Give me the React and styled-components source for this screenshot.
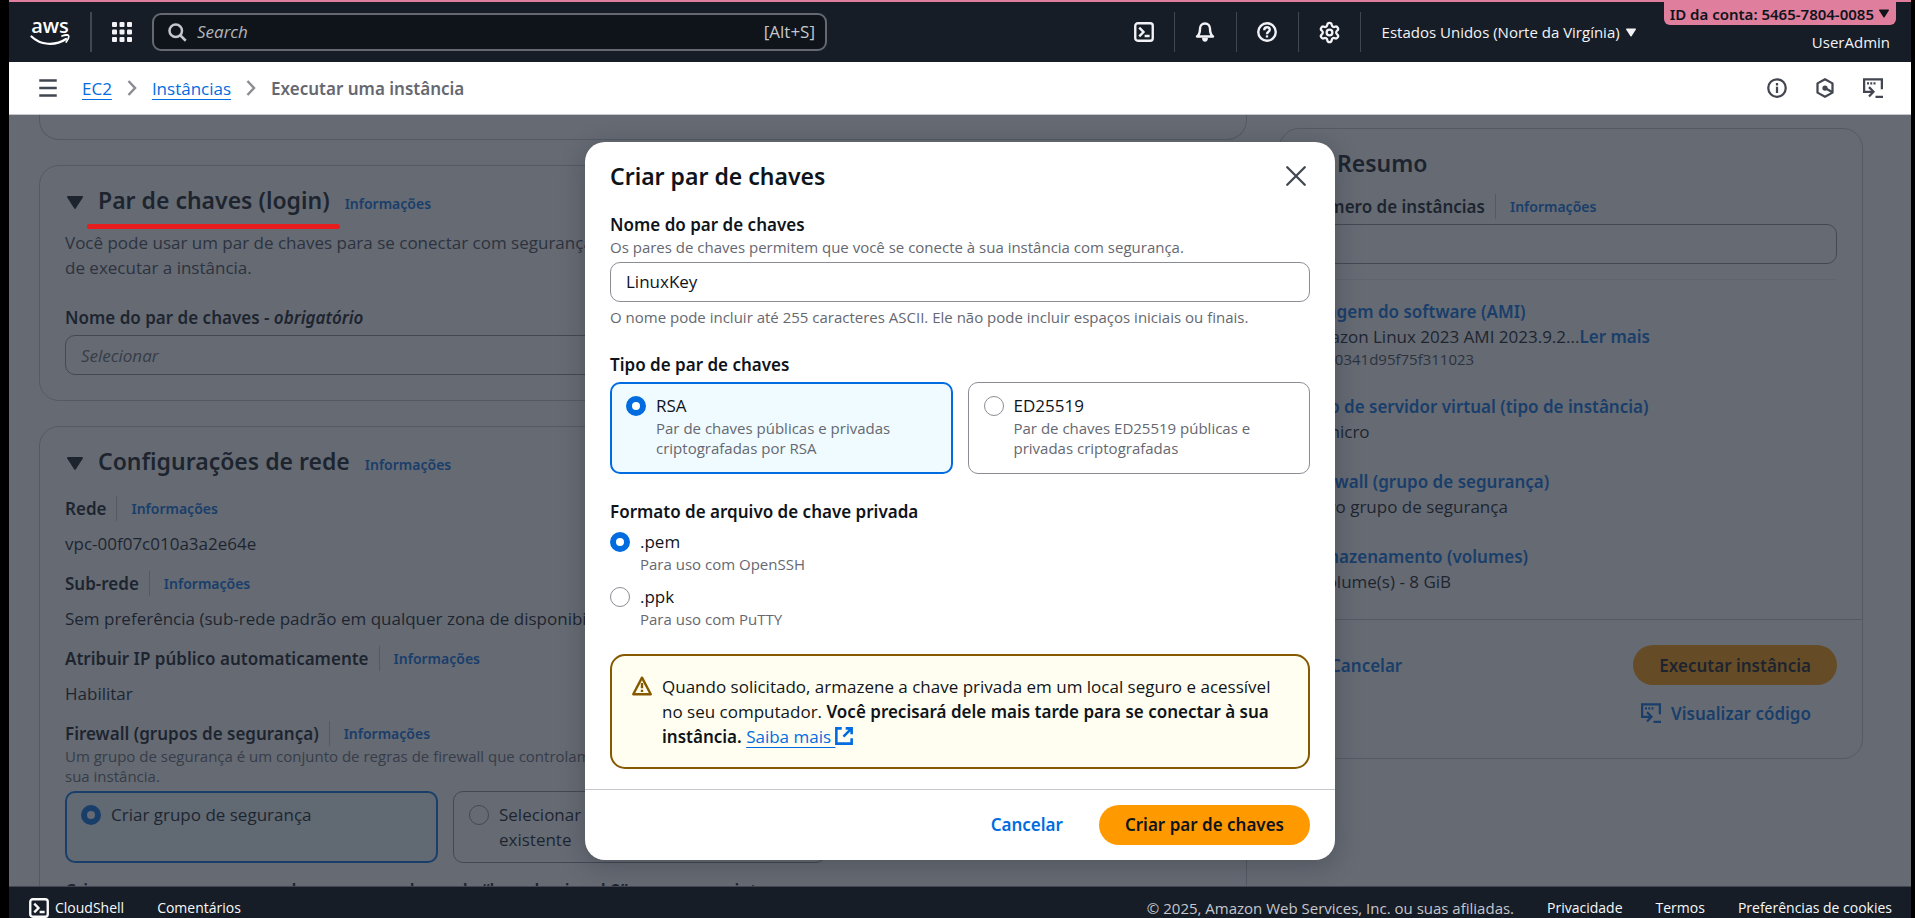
import React from 'react';
import styled, { createGlobalStyle, css } from 'styled-components';
import { Settings } from 'lucide-react';

const bodyFont = '"Open Sans", "Noto Sans", sans-serif';
const boldFont = '"Noto Sans", "Open Sans", sans-serif';

const c = {
  nav: '#161d26',
  text: '#0f141a',
  muted: '#656871',
  icon: '#424650',
  border: '#8c8c94',
  divider: '#c6c6cd',
  link: '#006ce0',
  primary: '#ff9900',
  pink: '#e07f9d',
  warn: '#855900',
};

const bold = css`
  font-family: ${boldFont};
  font-weight: 600;
`;

const GlobalStyle = createGlobalStyle`
  * { box-sizing: border-box; }
  body {
    margin: 0;
    background: #000;
    color: ${c.text};
    font: 400 17px/25px ${bodyFont};
  }
  button, input, select { font: inherit; color: inherit; }
  h1, h2, h3, p, fieldset, legend { margin: 0; padding: 0; border: 0; min-width: 0; }
`;

const Page = styled.div`
  display: flex;
  flex-direction: column;
  height: 100vh;
  margin: 0 4px 0 9px;
  overflow: hidden;
`;

/* ---------- top navigation ---------- */

const TopNav = styled.header`
  display: flex;
  align-items: center;
  flex: none;
  height: 62px;
  padding: 0 15px 0 21px;
  border-top: 2px solid ${c.pink};
  background: ${c.nav};
  color: #f3f3f7;
  font-size: 15px;
  line-height: 20px;
`;

const Logo = styled.a`
  display: flex;
  flex-direction: column;
  align-items: center;
  width: 40px;
  margin-right: 20px;
  color: #fff;
  font-weight: 600;
  font-size: 20px;
  line-height: 18px;
  text-decoration: none;
  svg { display: block; margin-top: -1px; }
`;

const NavRule = styled.span`
  width: ${p => p.$wide || 1}px;
  height: 40px;
  background: #424650;
`;

const IconButton = styled.button`
  display: flex;
  align-items: center;
  justify-content: center;
  width: ${p => p.$width || 20}px;
  height: 40px;
  padding: 0;
  border: 0;
  background: none;
  color: ${p => p.$color || 'inherit'};
`;

const Services = styled(IconButton)`
  width: 60px;
`;

const SearchBox = styled.label`
  display: flex;
  align-items: center;
  gap: 10px;
  flex: 0 1 675px;
  height: 38px;
  padding: 0 10px 0 13px;
  border: 2px solid #656871;
  border-radius: 9px;
  background: #0f141a;
  color: #c6c6cd;
  font-size: 17px;
`;

const SearchInput = styled.input`
  flex: 1;
  min-width: 0;
  padding: 0;
  border: 0;
  outline: 0;
  background: none;
  &::placeholder { color: #b4b4bb; font-style: italic; opacity: 1; }
`;

const NavTools = styled.div`
  display: flex;
  align-items: center;
  margin-left: auto;
`;

const Region = styled.button`
  display: flex;
  align-items: center;
  gap: 6px;
  padding: 0;
  margin: 0 28px 0 21px;
  border: 0;
  background: none;
  white-space: nowrap;
`;

const Account = styled.div`
  display: flex;
  flex-direction: column;
  align-items: flex-end;
  align-self: stretch;
  gap: 7px;
`;

const AccountBadge = styled.button`
  ${bold}
  display: flex;
  align-items: center;
  gap: 5px;
  height: 23px;
  padding: 0 7px 0 6px;
  border: 0;
  border-radius: 0 0 6px 6px;
  background: ${c.pink};
  color: ${c.text};
  font-size: 15px;
  white-space: nowrap;
`;

const UserName = styled.span`
  padding-right: 6px;
`;

/* ---------- breadcrumb bar ---------- */

const CrumbBar = styled.div`
  display: flex;
  align-items: center;
  flex: none;
  height: 53px;
  padding: 0 28px 0 29px;
  border-bottom: 1px solid ${c.divider};
  background: #fff;
`;

const Crumbs = styled.nav`
  display: flex;
  align-items: center;
  gap: 15px;
  margin-left: 24px;
`;

const Link = styled.a`
  color: ${c.link};
  text-decoration: underline;
  text-decoration-thickness: 1px;
  text-underline-offset: 4px;
`;

const CurrentCrumb = styled.span`
  ${bold}
  color: ${c.muted};
`;

const CrumbTools = styled.div`
  display: flex;
  gap: 28px;
  margin-left: auto;
  color: ${c.icon};
`;

/* ---------- main content ---------- */

const Main = styled.main`
  position: relative;
  flex: 1;
  min-height: 0;
  overflow: hidden;
  background: #fff;
`;

const Columns = styled.div`
  display: grid;
  grid-template-columns: minmax(0, 1fr) 584px;
  align-items: start;
  gap: 32px;
  padding: 0 48px 0 30px;
`;

const Stack = styled.div`
  display: flex;
  flex-direction: column;
  gap: ${p => p.$gap || 0}px;
`;

const Card = styled.section`
  border: 1px solid ${c.divider};
  border-radius: 20px;
  padding: 19px 25px 25px;
`;

const CardTail = styled.div`
  height: 25px;
  border: 1px solid ${c.divider};
  border-top: 0;
  border-radius: 0 0 20px 20px;
`;

const Aside = styled.aside`
  margin-top: 13px;
  border: 1px solid ${c.divider};
  border-radius: 20px;
`;

const AsideBody = styled.div`
  padding: 19px 25px 25px 24px;
`;

const CardHeader = styled.div`
  display: flex;
  align-items: baseline;
  gap: 15px;
  height: 30px;
  margin-bottom: ${p => p.$space}px;
  svg { margin-left: 2px; }
`;

const Title = styled.h2`
  ${bold}
  position: relative;
  font-size: 23px;
  line-height: 30px;
  white-space: nowrap;
`;

const Marker = styled.span`
  position: absolute;
  z-index: 3;
  left: -11px;
  right: -10px;
  bottom: -14px;
  height: 5px;
  border-radius: 3px;
  background: #e81c1c;
`;

const InfoLink = styled.a`
  ${bold}
  color: ${c.link};
  font-size: 14px;
  line-height: 20px;
  text-decoration: none;
`;

const LabelRow = styled.div`
  display: flex;
  align-items: center;
`;

const Label = styled.label`
  ${bold}
  display: block;
`;

const LabelRule = styled.span`
  width: 1px;
  height: 25px;
  margin: 0 14px 0 10px;
  background: ${c.divider};
`;

const Text = styled.p`
  color: ${p => (p.$muted ? c.icon : 'inherit')};
`;

const Hint = styled.p`
  color: ${c.muted};
  font-size: 15px;
  line-height: 20px;
`;

const field = css`
  display: block;
  width: 100%;
  height: 40px;
  padding: 0 15px;
  border: 1px solid ${c.border};
  border-radius: 10px;
  background: #fff;
`;

const TextInput = styled.input`${field}`;

const SelectInput = styled.select`
  ${field}
  appearance: none;
  color: ${c.muted};
  font-style: italic;
`;

const Field = styled.div`
  display: flex;
  flex-direction: column;
  margin-top: ${p => p.$top || 0}px;
  ${TextInput}, ${SelectInput} { margin-top: 5px; }
  ${TextInput} + ${Hint} { margin-top: 5px; }
`;

const Radio = styled.input`
  appearance: none;
  flex: none;
  width: 20px;
  height: 20px;
  margin: 3px 0 0;
  border: 1px solid ${c.border};
  border-radius: 50%;
  background: #fff;
  &:checked { border: 6px solid ${c.link}; }
`;

const Tiles = styled.div`
  display: grid;
  grid-template-columns: 1fr 1fr;
  gap: 15px;
  max-width: ${p => p.$max || 'none'};
  margin-top: 5px;
`;

const Tile = styled.label`
  display: flex;
  gap: 10px;
  padding: 10px 15px ${p => (p.$roomy ? 15 : 10)}px;
  border: 1px solid ${c.border};
  border-radius: 10px;
  &:has(:checked) {
    padding: 9px 14px ${p => (p.$roomy ? 14 : 9)}px;
    border: 2px solid ${c.link};
    background: #f0fbff;
  }
`;

const Option = styled.label`
  display: flex;
  gap: 10px;
`;

const OptionName = styled.span`
  display: block;
`;

const OptionHint = styled.span`
  display: block;
  color: ${c.muted};
  font-size: 15px;
  line-height: 20px;
`;

const NextLine = styled.p`
  ${bold}
  margin-top: 15px;
`;

const SummaryList = styled.div`
  display: flex;
  flex-direction: column;
  gap: 25px;
  margin-top: 15px;
  padding-top: 19px;
  border-top: 1px solid #ebebf0;
`;

const SummaryLink = styled.a`
  ${bold}
  color: ${c.link};
  text-decoration: none;
`;

const AmiId = styled.p`
  color: ${c.icon};
  font-size: 15px;
  line-height: 20px;
`;

const AsideFooter = styled.div`
  display: grid;
  grid-template-columns: auto auto;
  justify-content: space-between;
  justify-items: end;
  row-gap: 8px;
  padding: 25px 25px 25px 24px;
  border-top: 1px solid ${c.divider};
`;

const Button = styled.button`
  ${bold}
  display: inline-flex;
  align-items: center;
  justify-content: center;
  gap: 10px;
  height: 40px;
  padding: 0 26px;
  border: 0;
  border-radius: 20px;
  white-space: nowrap;
  background: ${p => (p.$primary ? c.primary : 'none')};
  color: ${p => (p.$primary ? c.text : c.link)};
`;

const CodeButton = styled(Button)`
  grid-column: 2;
`;

/* ---------- modal ---------- */

const Overlay = styled.div`
  position: absolute;
  inset: 0;
  z-index: 2;
  background: rgba(35, 43, 55, 0.7);
`;

const ModalLayer = styled.div`
  position: absolute;
  inset: 0;
  z-index: 4;
  display: flex;
  align-items: center;
  justify-content: center;
`;

const Dialog = styled.div`
  width: 750px;
  border-radius: 20px;
  background: #fff;
  box-shadow: 0 5px 25px rgba(15, 20, 26, 0.25);
`;

const DialogHeader = styled.div`
  display: flex;
  align-items: center;
  justify-content: space-between;
  height: 70px;
  padding: 0 27px 2px 25px;
`;

const DialogBody = styled.div`
  display: flex;
  flex-direction: column;
  gap: 25px;
  padding: 0 25px 20px;
`;

const Options = styled.div`
  display: flex;
  flex-direction: column;
  gap: 10px;
  margin-top: 5px;
`;

const Alert = styled.div`
  display: flex;
  gap: 10px;
  padding: 18px 20px;
  border: 2px solid ${c.warn};
  border-radius: 15px;
  background: #fffef0;
  svg { flex: none; margin-top: 2px; color: ${c.warn}; }
  ${Link} svg { color: inherit; vertical-align: -2px; }
`;

const Strong = styled.strong`
  ${bold}
`;

const DialogFooter = styled.div`
  display: flex;
  justify-content: flex-end;
  gap: 10px;
  padding: 15px 25px;
  border-top: 1px solid ${c.divider};
`;

/* ---------- bottom bar ---------- */

const BottomBar = styled.footer`
  display: flex;
  align-items: flex-start;
  flex: none;
  gap: 33px;
  height: 32px;
  padding: 11px 19px 0 20px;
  border-top: 1px solid #424650;
  background: ${c.nav};
  font-size: 14px;
  line-height: 20px;
  white-space: nowrap;
`;

const BarLink = styled.a`
  display: flex;
  align-items: center;
  gap: 6px;
  color: #f9f9fa;
  font-weight: 500;
  text-decoration: none;
`;

const Copyright = styled.span`
  margin-left: auto;
  color: #c6c6cd;
  font-size: 15px;
`;

/* ---------- icons ---------- */

const Svg = ({ size = 20, box = 16, w = 2, children }) => (
  <svg width={size} height={size} viewBox={`0 0 ${box} ${box}`} fill="none" stroke="currentColor" strokeWidth={w} aria-hidden="true">
    {children}
  </svg>
);

const Caret = ({ w = 16, h = 13 }) => (
  <svg width={w} height={h} viewBox="0 0 16 13" fill="currentColor" aria-hidden="true">
    <path d="M1 0h14c.9 0 1.300.9.8 1.600L8.900 12.300c-.5.8-1.300.8-1.800 0L.2 1.600C-.3.9.1 0 1 0Z" />
  </svg>
);

const GridIcon = () => (
  <svg width="20" height="20" viewBox="0 0 20 20" fill="currentColor" aria-hidden="true">
    {[0, 7.5, 15].map(y => [0, 7.5, 15].map(x => <rect key={`${x}-${y}`} x={x} y={y} width="5" height="5" rx="1" />))}
  </svg>
);

const SearchIcon = () => (
  <Svg><circle cx="7" cy="7" r="5" /><path d="m10.800 10.800 4.200 4.200" /></Svg>
);

const ShellIcon = () => (
  <Svg w={1.9}><rect x="1" y="1" width="14" height="14" rx="2" /><path d="M4.200 4.500 7.600 8l-3.400 3.500M8.500 11.200h4" /></Svg>
);

const BellIcon = () => (
  <Svg w={1.9}>
    <path strokeLinejoin="round" d="M8 1.200c-2.500 0-4 1.800-4 4.200 0 3.200-.6 4.800-2.400 6.200h12.800C12.600 10.200 12 8.600 12 5.400c0-2.400-1.500-4.200-4-4.200Z" />
    <path fill="currentColor" stroke="none" d="M5.600 12.500h4.800c0 1.900-1 3.200-2.400 3.200s-2.400-1.300-2.400-3.200Z" />
  </Svg>
);

const HelpIcon = () => (
  <Svg w={1.9}>
    <circle cx="8" cy="8" r="7" />
    <path d="M5.800 6.500C5.800 5 6.800 4.200 8 4.200s2.200.8 2.200 2c0 1.700-2.200 1.600-2.200 3.500" />
    <path d="M8 10.700v1.700" />
  </Svg>
);

const MenuIcon = () => (
  <Svg><path d="M1 2h14M1 8h14M1 14h14" /></Svg>
);

const ChevronIcon = () => (
  <svg width="10" height="16" viewBox="0 0 10 16" fill="none" stroke={c.border} strokeWidth="2.500" aria-hidden="true">
    <path d="m1.500 1 6.500 7-6.500 7" />
  </svg>
);

const InfoIcon = () => (
  <Svg w={1.800}><circle cx="8" cy="8" r="7" /><path d="M8 4v2M8 7v5" /></Svg>
);

const HexIcon = () => (
  <Svg w={1.800}>
    <path strokeLinejoin="round" d="M8 1l6 3.300v7.400L8 15l-6-3.300V4.300Z" />
    <circle cx="8" cy="8" r="2.100" fill="currentColor" stroke="none" />
    <path d="M8 8l5.600 3.200" />
  </Svg>
);

const CodeIcon = () => (
  <Svg w={1.800}>
    <path d="M15.100 9V1H.9v10h6.800" />
    <path d="M4.800 7.300 8.400 11l-3.600 3.800M10 15.100h6" />
    <path strokeDasharray="1.600 1" d="M3.200 4.200h7.200" />
  </Svg>
);

const CloseIcon = () => (
  <Svg w={1.800}><path strokeLinecap="round" d="m1 1 14 14M15 1 1 15" /></Svg>
);

const WarningIcon = () => (
  <Svg w={1.900}>
    <path strokeLinejoin="round" d="M8 1.300 1 14.600h14Z" />
    <path d="M8 5.500v4.200M8 11v1.700" />
  </Svg>
);

const ExternalIcon = () => (
  <Svg size={18} w={2.300}><path d="M6 1.200H1.200v13.600h13.600V10M9.500 1.200h5.300v5.300M14.500 1.500 7.500 8.500" /></Svg>
);

/* ---------- composed parts ---------- */

const Info = () => <InfoLink href="#info">Informações</InfoLink>;

const InfoLabel = ({ children, htmlFor }) => (
  <LabelRow>
    <Label as={htmlFor ? 'label' : 'span'} htmlFor={htmlFor}>{children}</Label>
    <LabelRule />
    <Info />
  </LabelRow>
);

const Setting = ({ label, value }) => (
  <Stack $gap={10}>
    <InfoLabel>{label}</InfoLabel>
    <Text>{value}</Text>
  </Stack>
);

const SummaryItem = ({ title, children }) => (
  <div>
    <SummaryLink href="#section">{title}</SummaryLink>
    {children}
  </div>
);

const Header = () => (
  <TopNav>
    <Logo href="#home">
      aws
      <svg width="40" height="14" viewBox="0 0 40 14" fill="none" stroke="currentColor" aria-hidden="true">
        <path strokeWidth="2.200" strokeLinecap="round" d="M1.500 2.500C10 11 25 12.500 36 5" />
        <path strokeWidth="1.700" strokeLinecap="round" strokeLinejoin="round" d="M32 2c3-1.200 6-1.200 6.500-.4.500 1-.4 4-2.300 6.400" />
      </svg>
    </Logo>
    <NavRule $wide={2} />
    <Services aria-label="Serviços"><GridIcon /></Services>
    <SearchBox>
      <SearchIcon />
      <SearchInput type="search" placeholder="Search" aria-label="Search" />
      <span>[Alt+S]</span>
    </SearchBox>
    <NavTools>
      <IconButton $width={60} aria-label="CloudShell"><ShellIcon /></IconButton>
      <NavRule />
      <IconButton $width={61} aria-label="Notificações"><BellIcon /></IconButton>
      <NavRule />
      <IconButton $width={61} aria-label="Ajuda"><HelpIcon /></IconButton>
      <NavRule />
      <IconButton $width={61} aria-label="Ajustes"><Settings size={23} strokeWidth={2.4} /></IconButton>
      <NavRule />
      <Region>Estados Unidos (Norte da Virgínia) <Caret w={10} h={9} /></Region>
    </NavTools>
    <Account>
      <AccountBadge>ID da conta: 5465-7804-0085 <Caret w={10} h={9} /></AccountBadge>
      <UserName>UserAdmin</UserName>
    </Account>
  </TopNav>
);

const LeftColumn = () => (
  <Stack $gap={25}>
    <CardTail />
    <Card>
      <CardHeader $space={15}>
        <Caret />
        <Title>Par de chaves (login)<Marker /></Title>
        <Info />
      </CardHeader>
      <Text $muted>
        Você pode usar um par de chaves para se conectar com segurança à sua instância. Certifique-se de que tenha acesso ao par antes<br />
        de executar a instância.
      </Text>
      <Field $top={25}>
        <Label htmlFor="key-select">Nome do par de chaves - <em>obrigatório</em></Label>
        <SelectInput id="key-select"><option>Selecionar</option></SelectInput>
      </Field>
    </Card>
    <Card>
      <CardHeader $space={20}>
        <Caret />
        <Title>Configurações de rede</Title>
        <Info />
      </CardHeader>
      <Stack $gap={15}>
        <Setting label="Rede" value="vpc-00f07c010a3a2e64e" />
        <Setting label="Sub-rede" value="Sem preferência (sub-rede padrão em qualquer zona de disponibilidade)" />
        <Setting label="Atribuir IP público automaticamente" value="Habilitar" />
        <div>
          <InfoLabel>Firewall (grupos de segurança)</InfoLabel>
          <Hint>
            Um grupo de segurança é um conjunto de regras de firewall que controlam o tráfego para sua instância. Adicione regras para permitir<br />
            sua instância.
          </Hint>
          <Tiles $max="761px">
            <Tile>
              <Radio type="radio" name="group" defaultChecked />
              <OptionName>Criar grupo de segurança</OptionName>
            </Tile>
            <Tile>
              <Radio type="radio" name="group" />
              <OptionName>Selecionar<br />existente</OptionName>
            </Tile>
          </Tiles>
          <NextLine>Criaremos um novo grupo de segurança chamado “launch-wizard-2” com as seguintes regras:</NextLine>
        </div>
      </Stack>
    </Card>
  </Stack>
);

const Summary = () => (
  <Aside>
    <AsideBody>
      <CardHeader $space={16}>
        <Caret />
        <Title>Resumo</Title>
      </CardHeader>
      <Field>
        <InfoLabel htmlFor="count">Número de instâncias</InfoLabel>
        <TextInput id="count" defaultValue="1" />
      </Field>
      <SummaryList>
        <SummaryItem title="Imagem do software (AMI)">
          <Text>Amazon Linux 2023 AMI 2023.9.2...<SummaryLink href="#more">Ler mais</SummaryLink></Text>
          <AmiId>ami-0341d95f75f311023</AmiId>
        </SummaryItem>
        <SummaryItem title="Tipo de servidor virtual (tipo de instância)"><Text>t3.micro</Text></SummaryItem>
        <SummaryItem title="Firewall (grupo de segurança)"><Text>Novo grupo de segurança</Text></SummaryItem>
        <SummaryItem title="Armazenamento (volumes)"><Text>1 volume(s) - 8 GiB</Text></SummaryItem>
      </SummaryList>
    </AsideBody>
    <AsideFooter>
      <Button>Cancelar</Button>
      <Button $primary>Executar instância</Button>
      <CodeButton><CodeIcon />Visualizar código</CodeButton>
    </AsideFooter>
  </Aside>
);

const KeyPairDialog = () => (
  <Dialog role="dialog" aria-modal="true" aria-labelledby="dialog-title">
    <DialogHeader>
      <Title id="dialog-title">Criar par de chaves</Title>
      <IconButton $color={c.icon} $width={24} aria-label="Fechar"><CloseIcon /></IconButton>
    </DialogHeader>
    <DialogBody>
      <Field>
        <Label htmlFor="key-name">Nome do par de chaves</Label>
        <Hint>Os pares de chaves permitem que você se conecte à sua instância com segurança.</Hint>
        <TextInput id="key-name" defaultValue="LinuxKey" />
        <Hint>O nome pode incluir até 255 caracteres ASCII. Ele não pode incluir espaços iniciais ou finais.</Hint>
      </Field>
      <fieldset>
        <Label as="legend">Tipo de par de chaves</Label>
        <Tiles>
          <Tile $roomy>
            <Radio type="radio" name="type" defaultChecked />
            <span>
              <OptionName>RSA</OptionName>
              <OptionHint>Par de chaves públicas e privadas criptografadas por RSA</OptionHint>
            </span>
          </Tile>
          <Tile $roomy>
            <Radio type="radio" name="type" />
            <span>
              <OptionName>ED25519</OptionName>
              <OptionHint>Par de chaves ED25519 públicas e privadas criptografadas</OptionHint>
            </span>
          </Tile>
        </Tiles>
      </fieldset>
      <fieldset>
        <Label as="legend">Formato de arquivo de chave privada</Label>
        <Options>
          <Option>
            <Radio type="radio" name="format" defaultChecked />
            <span>
              <OptionName>.pem</OptionName>
              <OptionHint>Para uso com OpenSSH</OptionHint>
            </span>
          </Option>
          <Option>
            <Radio type="radio" name="format" />
            <span>
              <OptionName>.ppk</OptionName>
              <OptionHint>Para uso com PuTTY</OptionHint>
            </span>
          </Option>
        </Options>
      </fieldset>
      <Alert role="alert">
        <WarningIcon />
        <p>
          Quando solicitado, armazene a chave privada em um local seguro e acessível no seu computador.{' '}
          <Strong>Você precisará dele mais tarde para se conectar à sua instância.</Strong>{' '}
          <Link href="#learn">Saiba mais <ExternalIcon /></Link>
        </p>
      </Alert>
    </DialogBody>
    <DialogFooter>
      <Button>Cancelar</Button>
      <Button $primary>Criar par de chaves</Button>
    </DialogFooter>
  </Dialog>
);

export default function App() {
  return (
    <>
      <GlobalStyle />
      <Page>
        <Header />
        <CrumbBar>
          <IconButton $color={c.icon} aria-label="Menu"><MenuIcon /></IconButton>
          <Crumbs>
            <Link href="#ec2">EC2</Link>
            <ChevronIcon />
            <Link href="#instances">Instâncias</Link>
            <ChevronIcon />
            <CurrentCrumb>Executar uma instância</CurrentCrumb>
          </Crumbs>
          <CrumbTools>
            <IconButton aria-label="Informações"><InfoIcon /></IconButton>
            <IconButton aria-label="Amazon Q"><HexIcon /></IconButton>
            <IconButton aria-label="Código"><CodeIcon /></IconButton>
          </CrumbTools>
        </CrumbBar>
        <Main>
          <Columns>
            <LeftColumn />
            <Summary />
          </Columns>
          <Overlay />
          <ModalLayer><KeyPairDialog /></ModalLayer>
        </Main>
        <BottomBar>
          <BarLink href="#cloudshell"><ShellIcon />CloudShell</BarLink>
          <BarLink href="#feedback">Comentários</BarLink>
          <Copyright>© 2025, Amazon Web Services, Inc. ou suas afiliadas.</Copyright>
          <BarLink href="#privacy">Privacidade</BarLink>
          <BarLink href="#terms">Termos</BarLink>
          <BarLink href="#cookies">Preferências de cookies</BarLink>
        </BottomBar>
      </Page>
    </>
  );
}
